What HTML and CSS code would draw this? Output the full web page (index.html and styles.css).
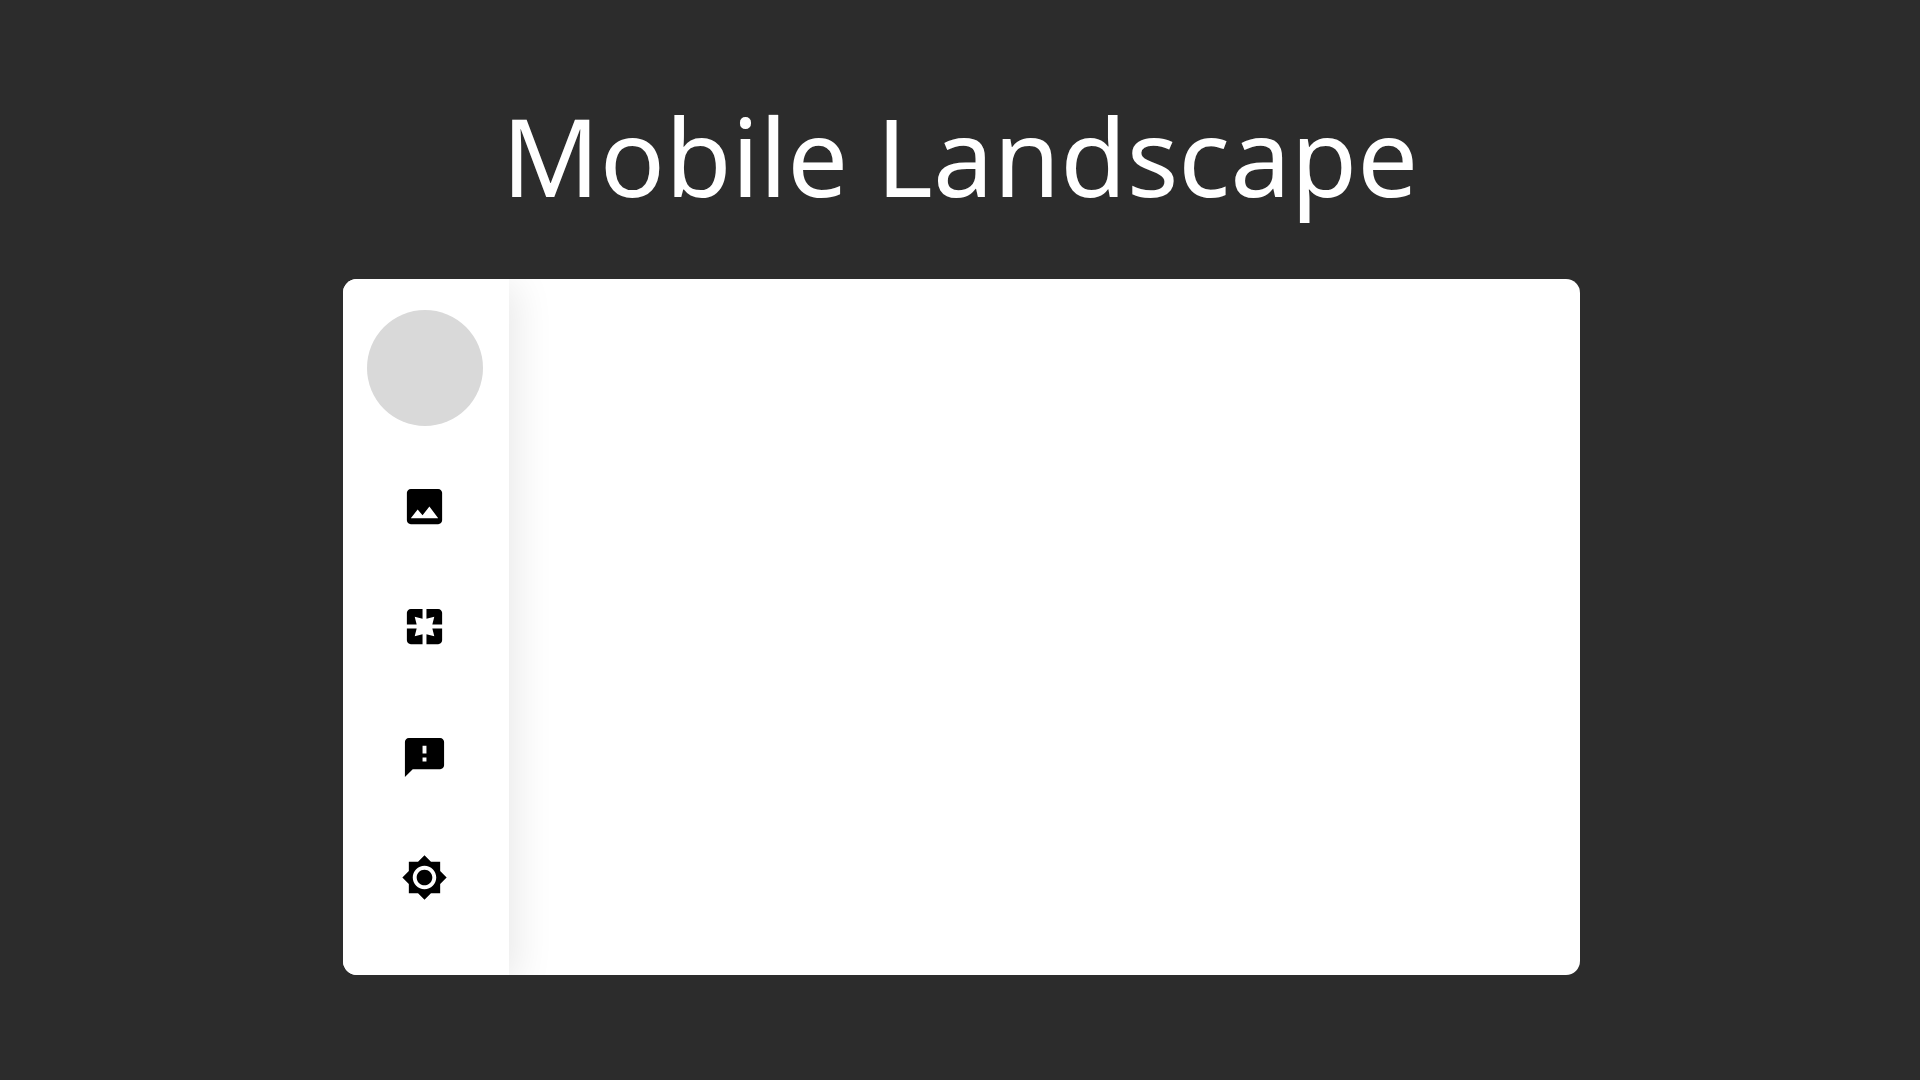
FILE: index.html
```html
<!doctype html>
<html lang="en">
<head>
    <meta charset="UTF-8">
    <title>Mobile Landscape</title>
    <meta name="viewport" content="width=device-width,initial-scale=1.0">
    <link rel="stylesheet" href="styles.css">
</head>
<body>
<h1 class="title">Mobile Landscape</h1>
<div class="screen">
    <aside class="sidebar">
        <div class="avatar"></div>
        <nav class="menu">
            <a href="#photos" aria-label="Photos">
                <svg viewBox="0 0 24 24"><path d="M21 19V5c0-1.100-.9-2-2-2H5c-1.100 0-2 .9-2 2v14c0 1.100.9 2 2 2h14c1.100 0 2-.9 2-2zM8.500 13.500l2.500 3.010L14.500 12l4.500 6H5l3.500-4.500z"/></svg>
            </a>
            <a href="#pages" aria-label="Pages">
                <svg viewBox="0 0 24 24"><path d="M3 5v6h5L7 7l4 1V3H5c-1.100 0-2 .9-2 2zm5 8H3v6c0 1.100.9 2 2 2h6v-5l-4 1 1-4zm9 4l-4-1v5h6c1.100 0 2-.9 2-2v-6h-5l1 4zm2-14h-6v5l4-1-1 4h5V5c0-1.100-.9-2-2-2z"/></svg>
            </a>
        </nav>
        <nav class="menu">
            <a href="#feedback" aria-label="Feedback">
                <svg viewBox="0 0 24 24"><path d="M20 2H4c-1.100 0-1.990.9-1.990 2L2 22l4-4h14c1.100 0 2-.9 2-2V4c0-1.100-.9-2-2-2zm-7 12h-2v-2h2v2zm0-4h-2V6h2v4z"/></svg>
            </a>
            <a href="#settings" aria-label="Settings">
                <svg viewBox="0 0 24 24"><path d="M20 8.690V4h-4.690L12 .69 8.690 4H4v4.690L.69 12 4 15.310V20h4.690L12 23.310 15.310 20H20v-4.690L23.310 12 20 8.690zM12 18c-3.310 0-6-2.690-6-6s2.690-6 6-6 6 2.690 6 6-2.690 6-6 6zm0-10c-2.210 0-4 1.790-4 4s1.790 4 4 4 4-1.790 4-4-1.790-4-4-4z"/></svg>
            </a>
        </nav>
    </aside>
    <main class="content"></main>
</div>
</body>
</html>
```
FILE: styles.css
```css
* {
    margin: 0;
    padding: 0;
    box-sizing: border-box;
}

body {
    min-height: 100vh;
    padding-top: 81px;
    background: #2c2c2c;
    font-family: "Noto Sans", sans-serif;
}

.title {
    margin-bottom: 48px;
    line-height: 150px;
    font-size: 108px;
    font-weight: 400;
    text-align: center;
    color: #fff;
}

.screen {
    display: flex;
    overflow: hidden;
    margin: 0 17.7% 0 17.88%;
    border-radius: 14px;
    background: #fff;
}

.sidebar {
    display: flex;
    flex-direction: column;
    align-items: center;
    width: 166px;
    padding: 31px 3px 74px 0;
    background: #fff;
    box-shadow: 8px 6px 36px rgba(0, 0, 0, .09);
}

.avatar {
    width: 116px;
    height: 116px;
    margin-bottom: 57px;
    border-radius: 50%;
    background: #d9d9d9;
}

.menu {
    display: flex;
    flex-direction: column;
    gap: 73px;
}

.menu + .menu {
    margin-top: 84px;
}

.menu a,
.menu svg {
    display: block;
    width: 47px;
    height: 47px;
}

.menu svg {
    fill: #000;
}

.content {
    flex: 1;
}
```
